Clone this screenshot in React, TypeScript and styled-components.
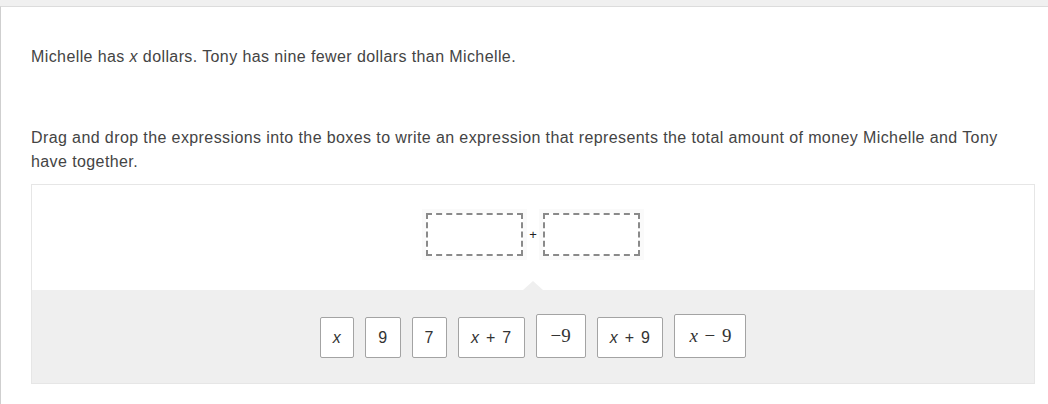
import * as React from "react";
import styled, { createGlobalStyle } from "styled-components";

const GlobalStyle = createGlobalStyle`
  html, body {
    margin: 0;
    padding: 0;
    background: #ffffff;
  }
`;

const Page = styled.div`
  width: 1048px;
  height: 404px;
  overflow: hidden;
  background: #f0f0f0;
  padding-top: 6px;
  box-sizing: border-box;
  font-family: "Liberation Sans", Arial, sans-serif;
`;

const Card = styled.div`
  background: #ffffff;
  border-top: 1px solid #dcdcdc;
  border-left: 1px solid #cfcfcf;
  min-height: 400px;
  padding: 38px 12px 0 30px;
`;

const Prompt = styled.p<{ $gap: number }>`
  margin: 0 0 ${(p) => p.$gap}px;
  font-size: 16px;
  line-height: 24px;
  letter-spacing: 0.4px;
  color: #444444;
  max-width: 1004px;

  i {
    font-style: italic;
  }
`;

const Interaction = styled.div`
  width: 1004px;
  box-sizing: border-box;
  border: 1px solid #e6e6e6;
  background: #ffffff;
`;

const DropZone = styled.div`
  position: relative;
  height: 105px;
  padding-top: 28px;
  box-sizing: border-box;

  &::after {
    content: "";
    position: absolute;
    left: 50%;
    bottom: 0;
    margin-left: -10px;
    border-left: 10px solid transparent;
    border-right: 10px solid transparent;
    border-bottom: 9px solid #efefef;
  }
`;

const DropRow = styled.div`
  display: flex;
  align-items: center;
  justify-content: center;
  gap: 6px;
`;

const Slot = styled.div`
  width: 97px;
  height: 43px;
  box-sizing: border-box;
  border: 2px dashed #8a8a8a;
  box-shadow: 0 0 0 4px #fafafa;
`;

const Operator = styled.span`
  font-size: 13px;
  color: #222222;
  line-height: 1;
`;

const Tray = styled.div`
  background: #efefef;
  height: 93px;
  display: flex;
  align-items: flex-end;
  justify-content: center;
  gap: 11px;
  padding-bottom: 25px;
  box-sizing: border-box;
`;

const Tile = styled.div<{ $math?: boolean }>`
  display: flex;
  align-items: center;
  justify-content: center;
  height: ${(p) => (p.$math ? 44 : 41)}px;
  padding: 0 ${(p) => (p.$math ? 14 : 12)}px;
  box-sizing: border-box;
  background: #ffffff;
  border: 1px solid #a3a3a3;
  border-radius: 2px;
  color: #333333;
  font-size: ${(p) => (p.$math ? 19 : 16)}px;
  font-family: ${(p) =>
    p.$math
      ? '"Liberation Serif", "Times New Roman", serif'
      : '"Liberation Sans", Arial, sans-serif'};
  word-spacing: ${(p) => (p.$math ? 0 : 1.5)}px;
  letter-spacing: ${(p) => (p.$math ? 0 : 0.5)}px;
  white-space: pre;

  i {
    font-style: italic;
  }
`;

const MathOp = styled.span`
  margin: 0 0.35em;
`;

const tiles: { label: React.ReactNode; math?: boolean }[] = [
  { label: <i>x</i> },
  { label: "9" },
  { label: "7" },
  { label: <><i>x</i> + 7</> },
  { label: "\u22129", math: true },
  { label: <><i>x</i> + 9</> },
  { label: <><i>x</i><MathOp>{"\u2212"}</MathOp>9</>, math: true },
];

const App = () => (
  <Page>
    <GlobalStyle />
    <Card>
      <Prompt $gap={57}>
        Michelle has <i>x</i> dollars. Tony has nine fewer dollars than Michelle.
      </Prompt>
      <Prompt $gap={10}>
        Drag and drop the expressions into the boxes to write an expression that
        represents the total amount of money Michelle and Tony have together.
      </Prompt>
      <Interaction>
        <DropZone>
          <DropRow>
            <Slot />
            <Operator>+</Operator>
            <Slot />
          </DropRow>
        </DropZone>
        <Tray>
          {tiles.map((t, i) => (
            <Tile key={i} $math={t.math}>
              {t.label}
            </Tile>
          ))}
        </Tray>
      </Interaction>
    </Card>
  </Page>
);

export default App;
